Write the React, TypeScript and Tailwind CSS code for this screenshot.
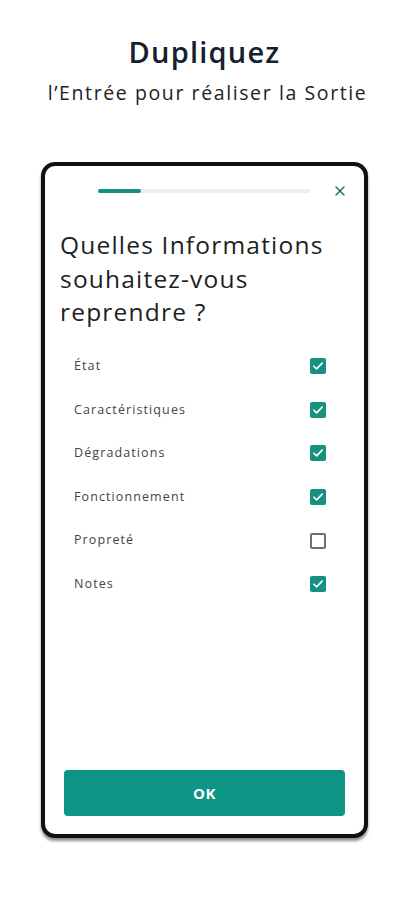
import { X } from 'lucide-react';

const items = [
  { label: 'État', checked: true },
  { label: 'Caractéristiques', checked: true },
  { label: 'Dégradations', checked: true },
  { label: 'Fonctionnement', checked: true },
  { label: 'Propreté', checked: false },
  { label: 'Notes', checked: true },
];

function Checkbox({ checked }: { checked: boolean }) {
  if (!checked) {
    return <div className="w-[16px] h-[16px] rounded-[2px] border-2 border-[#6f6f6f] bg-white" />;
  }
  return (
    <div className="w-[16px] h-[16px] rounded-[2px] bg-[#16907f] flex items-center justify-center">
      <svg viewBox="0 0 16 16" className="w-[12px] h-[12px]" fill="none">
        <path d="M2.5 8.3 L6.2 11.8 L13.5 4.2" stroke="#ffffff" strokeWidth="2.2" strokeLinecap="round" strokeLinejoin="round" />
      </svg>
    </div>
  );
}

export default function App() {
  return (
    <div className="w-[415px] h-[900px] bg-white flex flex-col font-['Open_Sans','Noto_Sans',sans-serif]">
      <h1 className="self-center pr-[6px] pt-[34px] text-[29px] leading-[36px] font-semibold text-[#14202e] tracking-[1.2px]">Dupliquez</h1>
      <p className="self-center mt-[10px] text-[19.5px] leading-[26px] text-[#232323] tracking-[1.6px]">l’Entrée pour réaliser la Sortie</p>

      <div className="ml-[41px] mt-[56px] w-[327px] h-[676px] border-4 border-[#111111] rounded-[14px] bg-white shadow-[0_3px_3px_rgba(0,0,0,0.45)] flex flex-col">
        <div className="flex items-center pt-[17px] pl-[53px] pr-[16px]">
          <div className="w-[212px] h-[4px] rounded-full bg-[#eeeeee] flex">
            <div className="w-[43px] h-full rounded-full bg-[#14907f]" />
          </div>
          <div className="flex-1" />
          <X className="w-[16px] h-[16px] text-[#1d6e64]" strokeWidth={2} />
        </div>

        <h2 className="mt-[29px] pl-[15px] text-[24.5px] leading-[33.5px] text-[#1c1f23] tracking-[1.2px]">
          Quelles Informations
          <br />
          souhaitez-vous
          <br />
          reprendre ?
        </h2>

        <ul className="mt-[16px] flex flex-col">
          {items.map((it) => (
            <li key={it.label} className="h-[43.6px] flex items-center pl-[29px] pr-[38px]">
              <span className="flex-1 text-[12.5px] text-[#444444] tracking-[1.1px]">{it.label}</span>
              <Checkbox checked={it.checked} />
            </li>
          ))}
        </ul>

        <div className="flex-1" />

        <button className="mx-[19px] mb-[18px] h-[46px] rounded-[4px] bg-[#0e9484] text-white text-[15px] font-bold tracking-[0.5px]">
          OK
        </button>
      </div>
    </div>
  );
}
